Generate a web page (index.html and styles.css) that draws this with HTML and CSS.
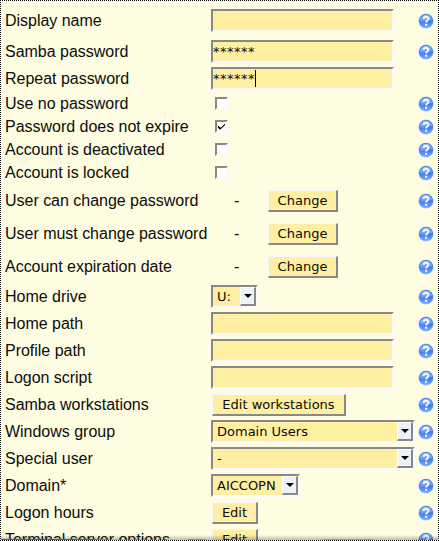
FILE: index.html
```html
<!DOCTYPE html>
<html lang="en">
<head>
<meta charset="utf-8">
<title>Samba account</title>
<link rel="stylesheet" href="styles.css">
</head>
<body>
<svg class="defs" width="0" height="0" aria-hidden="true">
<defs>
<linearGradient id="ball" x1="0" y1="0" x2="0" y2="1"><stop offset="0" stop-color="#3474e8"/><stop offset=".5" stop-color="#3b78f2"/><stop offset="1" stop-color="#78adff"/></linearGradient>
<linearGradient id="shine" x1="0" y1="0" x2="0" y2="1"><stop offset="0" stop-color="#a3c3fb"/><stop offset="1" stop-color="#5c92f7"/></linearGradient>
<symbol id="help" viewBox="0 0 16 16"><circle cx="8" cy="8" r="7.6" fill="#a9c4f2"/><circle cx="8" cy="8" r="7" fill="url(#ball)"/><path d="M1.8 8.6a6.2 6.2 0 0 1 12.4-1.2C11 7 7 9.8 1.8 8.6z" fill="url(#shine)"/><path d="M5.6 6C5.7 3.3 10.4 3.2 10.4 5.8 10.4 7.5 8.1 7.5 8.1 9.4" fill="none" stroke="#fff" stroke-width="1.7"/><circle cx="8.1" cy="11.8" r="1.1" fill="#fff"/></symbol>
</defs>
</svg>
<main class="panel">
<div class="row first"><label>Display name</label><div class="control"><input class="field" type="text"></div><svg class="help"><use href="#help"/></svg></div>
<div class="row"><label>Samba password</label><div class="control"><div class="field secret">******</div></div><svg class="help"><use href="#help"/></svg></div>
<div class="row"><label>Repeat password</label><div class="control"><div class="field secret">******<i class="caret"></i></div></div></div>
<div class="row check"><label>Use no password</label><div class="control"><span class="box"></span></div><svg class="help"><use href="#help"/></svg></div>
<div class="row check"><label>Password does not expire</label><div class="control"><span class="box"><svg class="tick" viewBox="0 0 7 7" shape-rendering="crispEdges"><path d="M0 3h1v1h1v1h1v-1h1v-1h1v-1h1v-1h1v1h-1v1h-1v1h-1v1h-1v1h-2v-1h-1z" stroke="#000" stroke-width=".3"/></svg></span></div><svg class="help"><use href="#help"/></svg></div>
<div class="row check"><label>Account is deactivated</label><div class="control"><span class="box"></span></div><svg class="help"><use href="#help"/></svg></div>
<div class="row check"><label>Account is locked</label><div class="control"><span class="box"></span></div><svg class="help"><use href="#help"/></svg></div>
<div class="row date"><label>User can change password</label><div class="control"><span class="value">-</span><button>Change</button></div><svg class="help"><use href="#help"/></svg></div>
<div class="row date"><label>User must change password</label><div class="control"><span class="value">-</span><button>Change</button></div><svg class="help"><use href="#help"/></svg></div>
<div class="row date"><label>Account expiration date</label><div class="control"><span class="value">-</span><button>Change</button></div><svg class="help"><use href="#help"/></svg></div>
<div class="row"><label>Home drive</label><div class="control"><div class="select drive"><span>U:</span><b class="arrow"></b></div></div><svg class="help"><use href="#help"/></svg></div>
<div class="row"><label>Home path</label><div class="control"><input class="field" type="text"></div><svg class="help"><use href="#help"/></svg></div>
<div class="row"><label>Profile path</label><div class="control"><input class="field" type="text"></div><svg class="help"><use href="#help"/></svg></div>
<div class="row"><label>Logon script</label><div class="control"><input class="field" type="text"></div><svg class="help"><use href="#help"/></svg></div>
<div class="row"><label>Samba workstations</label><div class="control"><button class="workstations">Edit workstations</button></div><svg class="help"><use href="#help"/></svg></div>
<div class="row"><label>Windows group</label><div class="control"><div class="select wide"><span>Domain Users</span><b class="arrow"></b></div></div><svg class="help"><use href="#help"/></svg></div>
<div class="row"><label>Special user</label><div class="control"><div class="select wide"><span>-</span><b class="arrow"></b></div></div><svg class="help"><use href="#help"/></svg></div>
<div class="row"><label>Domain*</label><div class="control"><div class="select domain"><span>AICCOPN</span><b class="arrow"></b></div></div><svg class="help"><use href="#help"/></svg></div>
<div class="row"><label>Logon hours</label><div class="control"><button class="edit">Edit</button></div><svg class="help"><use href="#help"/></svg></div>
<div class="row"><label>Terminal server options</label><div class="control"><button class="edit">Edit</button></div><svg class="help"><use href="#help"/></svg></div>
<div class="shade"></div>
</main>
</body>
</html>
```

FILE: styles.css
```css
* { box-sizing: border-box; }
body { margin: 0; background: #fffde1; color: #0c0c0c; overflow: hidden; }
.defs { position: absolute; }
.panel {
  position: relative;
  width: 439px;
  height: 541px;
  padding: 2px 4px 0;
  overflow: hidden;
  border: 1px dotted #000;
  font: 16px "Liberation Sans", Arial, sans-serif;
}
.row {
  display: grid;
  grid-template-columns: 206px 207px 16px;
  align-items: center;
  height: 27px;
}
.row.first { height: 35px; }
.row.check { height: 23px; }
.row.date { height: 33px; }
label { line-height: 18px; letter-spacing: -0.02px; white-space: nowrap; }
.control {
  display: flex;
  align-items: center;
  font: 13px "DejaVu Sans", sans-serif;
}
.field {
  display: flex;
  align-items: center;
  width: 183px;
  height: 23px;
  padding: 0;
  border: 2px solid;
  border-color: #888 #f8faff #f8faff #888;
  background: #ffefa2;
  font: 13px "DejaVu Sans", sans-serif;
  outline: 0;
}
.secret { letter-spacing: .5px; }
.caret { width: 1px; height: 17px; background: #000; }
.box {
  display: grid;
  place-items: center;
  width: 13px;
  height: 13px;
  margin-left: 4px;
  border: 2px solid;
  border-color: #888 #f8faff #f8faff #888;
  background: #fff;
}
.tick { width: 7px; height: 7px; }
.value { width: 57px; padding-left: 23px; font: 16px "Liberation Sans", Arial, sans-serif; }
button {
  width: 70px;
  height: 22px;
  padding: 0;
  border: 2px solid;
  border-color: #f5f8ff #888 #888 #f5f8ff;
  border-width: 1px 2px 2px 1px;
  background: #ffefa2;
  color: #0c0c0c;
  font: 13px "DejaVu Sans", sans-serif;
}
.workstations { width: 134px; margin-left: 1px; }
.edit { width: 46px; margin-left: 1px; }
.select {
  display: flex;
  justify-content: space-between;
  align-items: center;
  height: 23px;
  padding-left: 4px;
  border: 2px solid;
  border-color: #888 #f8faff #f8faff #888;
  background: #ffefa2;
}
.drive { width: 47px; }
.wide { width: 204px; }
.domain { width: 89px; }
.arrow {
  display: grid;
  place-items: center;
  width: 16px;
  height: 19px;
  padding-left: 1px;
  border: 1px solid;
  border-color: #fff #888 #888 #fff;
  border-width: 1px 2px 2px 1px;
  background: #eef1f7;
}
.arrow::before {
  content: "";
  border: 4px solid transparent;
  border-top-color: #000;
  border-bottom: 0;
}
.help { width: 16px; height: 16px; }
.shade {
  position: absolute;
  inset: auto 0 0 0;
  height: 5px;
  background:
    linear-gradient(90deg, #3655b0 0 92px, #a37780 100px, #777 106px, transparent 107px 186px, #888 187px 204px, transparent 205px 322px, #999 323px 370px, transparent 371px) 0 100% / 100% 1px no-repeat,
    linear-gradient(transparent, rgba(60, 60, 50, .35));
}
```
